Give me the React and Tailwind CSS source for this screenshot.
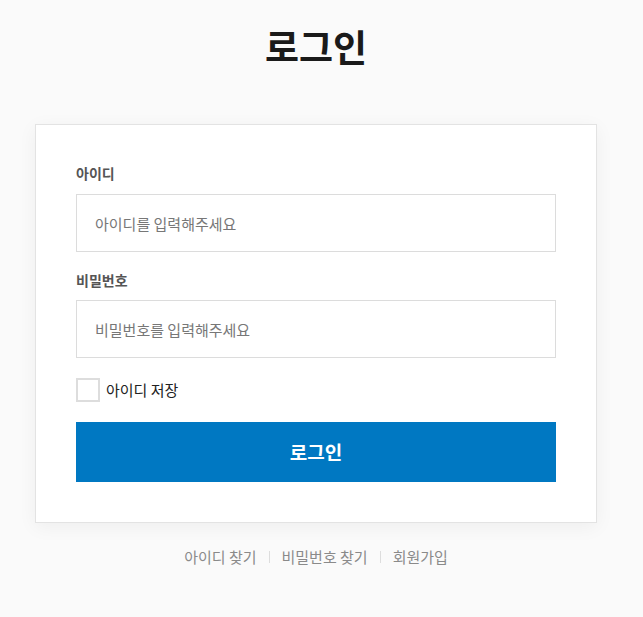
import { useState } from "react";

export default function App() {
  const [userId, setUserId] = useState("");
  const [password, setPassword] = useState("");
  const [remember, setRemember] = useState(false);

  return (
    <div className="min-h-screen bg-[#fafafa] font-['Noto_Sans_CJK_KR','Noto_Sans',sans-serif]">
      <div className="w-[632px]">
        <div className="w-[562px] mx-auto pt-[22px]">
          <h1 className="text-center text-[37px] leading-[48px] font-bold text-[#1a1a1a]">로그인</h1>

          {/* Login card */}
          <form
            onSubmit={e => e.preventDefault()}
            className="mt-[54px] bg-white border border-[#e3e3e3] shadow-[0_4px_18px_rgba(0,0,0,0.05)] px-10 pt-[38px] pb-10"
          >
            <label className="block text-[14px] leading-[20px] font-bold text-[#555] mb-[11px]">아이디</label>
            <input
              type="text"
              value={userId}
              onChange={e => setUserId(e.target.value)}
              placeholder="아이디를 입력해주세요"
              className="block w-full h-[58px] border border-[#dcdcdc] px-[18px] text-[15px] text-[#333] placeholder:text-[#777] outline-none"
            />

            <label className="block mt-[18px] text-[14px] leading-[20px] font-bold text-[#555] mb-[10px]">비밀번호</label>
            <input
              type="password"
              value={password}
              onChange={e => setPassword(e.target.value)}
              placeholder="비밀번호를 입력해주세요"
              className="block w-full h-[58px] border border-[#dcdcdc] px-[18px] text-[15px] text-[#333] placeholder:text-[#777] outline-none"
            />

            <label className="mt-5 flex items-center gap-[6px] cursor-pointer">
              <span
                onClick={() => setRemember(!remember)}
                className="w-6 h-6 border-2 border-[#dddddd] bg-white"
              ></span>
              <span className="text-[15px] leading-[24px] text-[#222]">아이디 저장</span>
            </label>

            <button type="submit" className="mt-[20px] w-full h-[60px] bg-[#0078c2] text-white text-[19px] font-bold">
              로그인
            </button>
          </form>

          <div className="mt-[23px] flex justify-center items-center text-[15px] leading-[22px] text-[#8a8a8a]">
            <a href="#">아이디 찾기</a>
            <span className="mx-[12px] w-px h-3 bg-[#dddddd]"></span>
            <a href="#">비밀번호 찾기</a>
            <span className="mx-[12px] w-px h-3 bg-[#dddddd]"></span>
            <a href="#">회원가입</a>
          </div>
        </div>
      </div>
    </div>
  );
}
